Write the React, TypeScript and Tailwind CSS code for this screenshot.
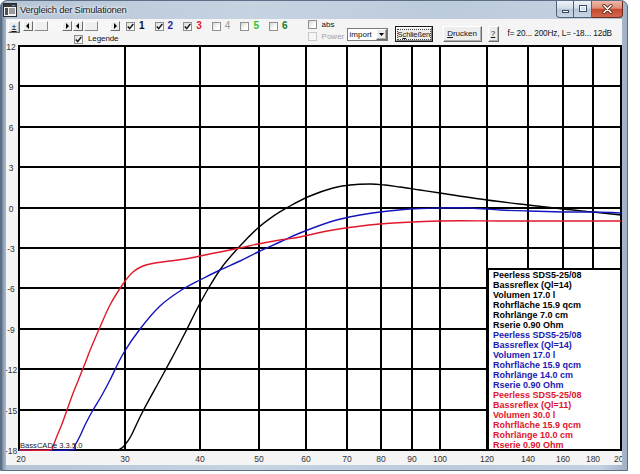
import React from "react";

const X0 = 19, X1 = 621, Y0 = 46, Y1 = 450;
const fx = (f: number) => X0 + (X1 - X0) * Math.log10(f / 20);
const fy = (db: number) => Y0 + (12 - db) * ((Y1 - Y0) / 30);

type P = [number, number];

function smooth(pts: P[]): string {
  let d = `M${pts[0][0]},${pts[0][1]}`;
  for (let i = 0; i < pts.length - 1; i++) {
    const p0 = pts[i - 1] ?? pts[i];
    const p1 = pts[i];
    const p2 = pts[i + 1];
    const p3 = pts[i + 2] ?? p2;
    const c1: P = [p1[0] + (p2[0] - p0[0]) / 6, p1[1] + (p2[1] - p0[1]) / 6];
    const c2: P = [p2[0] - (p3[0] - p1[0]) / 6, p2[1] - (p3[1] - p1[1]) / 6];
    d += ` C${c1[0].toFixed(1)},${c1[1].toFixed(1)} ${c2[0].toFixed(1)},${c2[1].toFixed(1)} ${p2[0]},${p2[1]}`;
  }
  return d;
}

const black: P[] = [
  [19, 450], [115, 450], [120, 449], [124, 446], [131, 436], [142, 413], [160, 380], [173, 356],
  [185, 333], [197, 309], [208, 289], [222, 267], [240, 246], [258, 228], [275, 215], [290, 206],
  [310, 196], [333, 188], [350, 185], [370, 184], [385, 185], [400, 187], [420, 190], [440, 193],
  [487, 200], [528, 205], [563, 209], [593, 212], [621, 215],
];
const blue: P[] = [
  [19, 450], [70, 450], [75, 445], [80, 436], [86, 423], [93, 410], [102, 395], [110, 380],
  [123, 354], [140, 329], [160, 306], [180, 291], [200, 280], [220, 270], [240, 261], [258, 252],
  [280, 242], [300, 233], [333, 221], [360, 215], [380, 212], [410, 209], [440, 208], [470, 208],
  [500, 210], [528, 211], [563, 212], [593, 212], [621, 213],
];
const red: P[] = [
  [19, 450], [49, 450], [53, 446], [57, 436], [62, 424], [67, 410], [72, 396], [78, 381],
  [84, 366], [91, 348], [100, 327], [110, 305], [123, 284], [133, 272], [143, 266], [155, 263],
  [170, 261], [185, 259], [200, 256], [220, 252], [240, 248], [258, 244], [280, 240], [300, 237],
  [333, 230], [380, 224], [440, 221], [500, 221], [560, 221], [621, 221],
];

const dbs = [12, 9, 6, 3, 0, -3, -6, -9, -12, -15, -18];
const freqs = [20, 30, 40, 50, 60, 70, 80, 90, 100, 120, 140, 160, 180, 200];

const legend: { color: string; lines: string[] }[] = [
  {
    color: "text-[#000000]",
    lines: ["Peerless SDS5-25/08", "Bassreflex (Ql=14)", "Volumen 17.0 l", "Rohrfläche 15.9 qcm", "Rohrlänge 7.0 cm", "Rserie 0.90 Ohm"],
  },
  {
    color: "text-[#1a1ab4]",
    lines: ["Peerless SDS5-25/08", "Bassreflex (Ql=14)", "Volumen 17.0 l", "Rohrfläche 15.9 qcm", "Rohrlänge 14.0 cm", "Rserie 0.90 Ohm"],
  },
  {
    color: "text-[#e0142c]",
    lines: ["Peerless SDS5-25/08", "Bassreflex (Ql=11)", "Volumen 30.0 l", "Rohrfläche 15.9 qcm", "Rohrlänge 10.0 cm", "Rserie 0.90 Ohm"],
  },
];

function Box({ checked, disabled }: { checked?: boolean; disabled?: boolean }) {
  return (
    <span
      className={
        disabled
          ? "flex h-[9px] w-[9px] shrink-0 items-center justify-center border border-[#c9c9c9] bg-[#f6f6f6]"
          : "flex h-[9px] w-[9px] shrink-0 items-center justify-center border border-[#8e8f8f] bg-[linear-gradient(135deg,#d8d8d8,#ffffff_70%)]"
      }
    >
      {checked && (
        <svg width="7" height="7" viewBox="0 0 7 7">
          <path d="M0.8 3.4 L2.7 5.6 L6.3 1.0" fill="none" stroke="#1a1a1a" strokeWidth="1.5" />
        </svg>
      )}
    </span>
  );
}

function Arrow({ dir }: { dir: "l" | "r" }) {
  return (
    <span className="flex h-[10px] w-[10px] shrink-0 items-center justify-center border border-t-white border-l-white border-r-[#6b6b6b] border-b-[#6b6b6b] bg-[#ececec]">
      <svg width="4" height="6" viewBox="0 0 4 6">
        {dir === "l" ? <path d="M3 0 L0 3 L3 6 Z" fill="#000" /> : <path d="M1 0 L4 3 L1 6 Z" fill="#000" />}
      </svg>
    </span>
  );
}

function Scroll({ wide }: { wide?: boolean }) {
  return (
    <div className={wide ? "flex h-[10px] w-[49px]" : "flex h-[10px] w-[47px]"}>
      <Arrow dir="l" />
      <span className="ml-[1px] h-[10px] w-[14px] border border-t-white border-l-white border-r-[#8a8a8a] border-b-[#8a8a8a] bg-[#efefef]" />
      <span className="h-[10px] flex-1 bg-[#f7f7f7]" />
      <Arrow dir="r" />
    </div>
  );
}

const raised =
  "flex items-center justify-center border border-t-white border-l-white border-r-[#6b6b6b] border-b-[#6b6b6b] bg-[#ededed] shadow-[inset_-1px_-1px_0_#b0b0b0]";

export default function App() {
  const checks = [
    { n: "1", on: true, c: "text-[#111111] font-bold" },
    { n: "2", on: true, c: "text-[#2626a6] font-bold" },
    { n: "3", on: true, c: "text-[#e21b32] font-bold" },
    { n: "4", on: false, c: "text-[#9a9a9a]" },
    { n: "5", on: false, c: "text-[#2ec42e] font-bold" },
    { n: "6", on: false, c: "text-[#237a23] font-bold" },
  ];

  return (
    <div className="relative h-[474px] w-[640px] overflow-hidden bg-white font-['Liberation_Sans',Arial,sans-serif]">
      <div className="flex h-[471px] w-[628px] flex-col rounded-t-[7px] border border-[#5d6f86] bg-[linear-gradient(90deg,#4f5f74_0px,#8a9bb1_2px,#b6c5d6_6px,#c6d3e1_40%,#bccbdc_70%,#c3d1e0_96%,#9fb1c6_100%)]">
        {/* Title bar */}
        <div className="flex h-[18px] shrink-0 items-start">
          <svg className="ml-[2px] mt-[2px]" width="14" height="14" viewBox="0 0 14 14">
            <rect x="0.5" y="0.5" width="13" height="13" fill="#f4f4f4" stroke="#2b2b2b" />
            <rect x="1" y="1" width="12" height="3" fill="#3a3a3a" />
            <rect x="2" y="5" width="3" height="7" fill="#505050" />
            <line x1="6" y1="6" x2="12" y2="6" stroke="#444" />
            <line x1="6" y1="8" x2="12" y2="8" stroke="#444" />
            <line x1="6" y1="10" x2="12" y2="10" stroke="#444" />
            <rect x="9" y="2" width="3" height="1" fill="#6a8fd0" />
          </svg>
          <span className="ml-[3px] mt-[2px] text-[9.5px] leading-[13px] tracking-[-0.25px] text-[#1c1c1c] [text-shadow:0_0_5px_#ffffff,0_0_3px_#ffffff]">
            Vergleich der Simulationen
          </span>
          <div className="flex-1" />
          <div className="mr-[4px] flex h-[17px]">
            <div className="flex w-[36px] overflow-hidden rounded-bl-[4px] border border-t-0 border-[#50627a] bg-[linear-gradient(#eef3f8,#d3dee9_45%,#b7c6d7_50%,#c9d6e4)]">
              <div className="flex w-1/2 items-center justify-center border-r border-[#50627a]">
                <svg width="9" height="10" viewBox="0 0 9 10">
                  <rect x="1.5" y="6.5" width="6" height="2" fill="#fff" stroke="#394a61" />
                </svg>
              </div>
              <div className="flex w-1/2 items-center justify-center">
                <svg width="10" height="10" viewBox="0 0 10 10">
                  <rect x="1.5" y="1.5" width="7" height="6" fill="none" stroke="#394a61" strokeWidth="1" />
                  <rect x="2.5" y="2.5" width="5" height="4" fill="none" stroke="#ffffff" strokeWidth="1" />
                  <rect x="3.5" y="4" width="3" height="2" fill="#d8e2ec" />
                </svg>
              </div>
            </div>
            <div className="flex w-[31px] items-center justify-center rounded-br-[4px] border border-t-0 border-l-0 border-[#6b2a1e] bg-[linear-gradient(#f0b9a9,#dd8d78_45%,#c84a30_52%,#d2674e)]">
              <svg width="11" height="10" viewBox="0 0 11 10">
                <path d="M2 1.5 L9 8.5 M9 1.5 L2 8.5" stroke="#5a2418" strokeWidth="3.2" strokeLinecap="round" />
                <path d="M2 1.5 L9 8.5 M9 1.5 L2 8.5" stroke="#ffffff" strokeWidth="1.7" strokeLinecap="round" />
              </svg>
            </div>
          </div>
        </div>

        {/* Body */}
        <div className="flex min-h-0 flex-1 px-[5px] pb-[5px]">
          <div className="flex h-[446px] w-[616px] flex-col overflow-hidden bg-[#f4f4f4]">
            {/* Toolbar */}
            <div className="flex h-[27px] shrink-0 items-start text-[8px] leading-[10px] text-[#111]">
              <div className={`${raised} ml-[2px] mt-[2px] h-[12px] w-[12px] text-[9px] leading-[9px]`}>
                <span className="underline">±</span>
              </div>
              <div className="ml-[3px] mt-[2px] flex w-[97px] flex-col">
                <div className="flex gap-[1px]">
                  <Scroll wide />
                  <Scroll />
                </div>
                <div className="ml-[51px] mt-[3px] flex items-center">
                  <Box checked />
                  <span className="ml-[5px] text-[8px] leading-[10px] tracking-[-0.1px]">Legende</span>
                </div>
              </div>
              <div className="ml-[6px] mt-[2px] flex">
                {checks.map((c) => (
                  <div key={c.n} className="flex w-[28.6px] items-center">
                    <Box checked={c.on} />
                    <span className={`ml-[4px] text-[10px] leading-[10px] ${c.c}`}>{c.n}</span>
                  </div>
                ))}
              </div>
              <div className="ml-[10px] mt-[1px] flex w-[36px] flex-col">
                <div className="flex items-center">
                  <Box />
                  <span className="ml-[5px] text-[8px] leading-[9px]">abs</span>
                </div>
                <div className="mt-[3px] flex items-center">
                  <Box disabled />
                  <span className="ml-[5px] text-[8px] leading-[9px] text-[#a3a3a3]">Power</span>
                </div>
              </div>
              <div className="ml-[3px] mt-[9px] flex h-[13px] w-[41px] border border-[#7a7a7a] bg-white">
                <span className="flex-1 pl-[2px] text-[8px] leading-[11px]">import</span>
                <span className={`${raised} h-[11px] w-[11px]`}>
                  <svg width="5" height="3" viewBox="0 0 5 3">
                    <path d="M0 0 L5 0 L2.5 3 Z" fill="#000" />
                  </svg>
                </span>
              </div>
              <div className="ml-[7px] mt-[7px] flex h-[16px] w-[38px] border border-[#1a1a1a] bg-[#ededed]">
                <div className="flex flex-1 items-center justify-center border border-t-white border-l-white border-r-[#808080] border-b-[#808080]">
                  <span className="border border-dotted border-[#444] text-[7.5px] leading-[9px] tracking-[-0.1px]">
                    S<span className="underline">c</span>hließen
                  </span>
                </div>
              </div>
              <div className={`${raised} ml-[10px] mt-[7px] h-[16px] w-[39px] text-[8px]`}>
                <span>
                  <span className="underline">D</span>rucken
                </span>
              </div>
              <div className={`${raised} ml-[6px] mt-[7px] h-[16px] w-[11px] text-[8px]`}>
                <span className="underline">?</span>
              </div>
              <span className="ml-[9px] mt-[10px] whitespace-pre text-[8.2px] leading-[10px] tracking-[-0.1px]">
                f= 20... 200Hz, L= -18... 12dB
              </span>
            </div>

            {/* Chart */}
            <div className="relative h-[419px] w-[616px] shrink-0">
              <svg width="616" height="419" viewBox="6 46 616 419" className="overflow-visible">
                <defs>
                  <clipPath id="plot">
                    <rect x={X0} y={Y0} width={X1 - X0} height={Y1 - Y0 + 1} />
                  </clipPath>
                </defs>
                <rect x={X0} y={Y0} width={X1 - X0} height={Y1 - Y0} fill="#ffffff" />
                <g stroke="#000" strokeWidth="2">
                  {dbs.map((d) => (
                    <line key={d} x1={X0 - 1} x2={X1 + 1} y1={Math.round(fy(d))} y2={Math.round(fy(d))} />
                  ))}
                  {freqs.map((f) => (
                    <line key={f} x1={Math.round(fx(f))} x2={Math.round(fx(f))} y1={Y0} y2={Y1} />
                  ))}
                </g>
                <g clipPath="url(#plot)" fill="none" strokeWidth="1.4" strokeLinejoin="round">
                  <path d={smooth(black)} stroke="#000000" />
                  <path d={smooth(blue)} stroke="#1414bc" />
                  <path d={smooth(red)} stroke="#e0182a" />
                </g>
                <g fontFamily="Liberation Sans, Arial, sans-serif" fontSize="8.5" fill="#333">
                  {dbs.map((d) => (
                    <text key={d} x={11} y={Math.round(fy(d)) + 4} textAnchor="middle">
                      {d}
                    </text>
                  ))}
                  {freqs.map((f) => (
                    <text key={f} x={Math.round(fx(f)) + (f === 20 ? 2 : 0)} y={462} textAnchor="middle">
                      {f}
                    </text>
                  ))}
                </g>
                <text x={20} y={448} fontFamily="Liberation Sans, Arial, sans-serif" fontSize="7.6" fill="#222">
                  BassCADe 3.3.5.0
                </text>
              </svg>

              <div className="absolute left-[481px] top-[222px] h-[183px] w-[135px] border-2 border-black bg-white pl-[4px] text-[9px] font-bold leading-[10px]">
                {legend.map((g, gi) =>
                  g.lines.map((l, li) => (
                    <div key={`${gi}-${li}`} className={`h-[10px] whitespace-nowrap ${g.color}`}>
                      {l}
                    </div>
                  ))
                )}
              </div>
            </div>
          </div>
        </div>
      </div>
    </div>
  );
}
